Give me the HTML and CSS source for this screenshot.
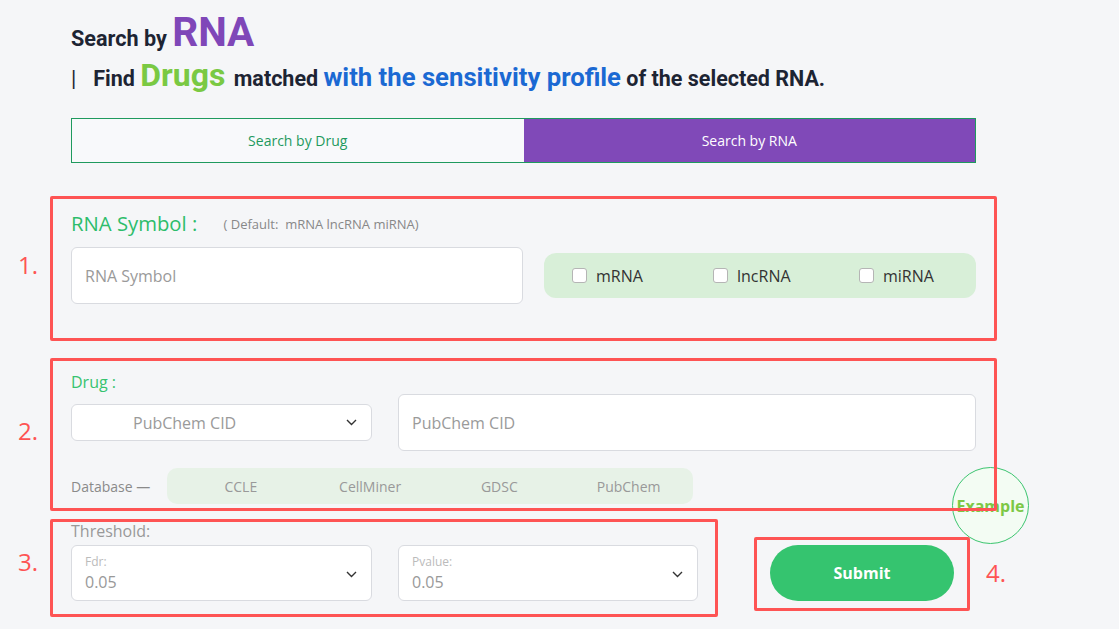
FILE: index.html
```html
<!DOCTYPE html>
<html lang="en">
<head>
    <meta charset="UTF-8">
    <meta name="viewport" content="width=device-width, initial-scale=1.0">
    <title>Search by RNA</title>
    <link rel="stylesheet" href="styles.css">
</head>
<body>

<div class="page">

    <h1 class="title">Search by <span class="title-rna">RNA</span></h1>
    <p class="subtitle"><span class="bar">|</span>Find <span class="hl-drugs">Drugs</span> matched <span class="hl-profile">with the sensitivity profile</span> of the selected RNA.</p>

    <!-- Switch between the two search modes -->
    <div class="tabs">
        <button class="tab">Search by Drug</button>
        <button class="tab active">Search by RNA</button>
    </div>

    <form class="search-form" onsubmit="return false">

        <!-- RNA symbol and type -->
        <section class="block-rna">
            <div class="block-label big">RNA Symbol : <small>( Default:&nbsp; mRNA lncRNA miRNA)</small></div>
            <div class="rna-row">
                <input class="field" type="text" placeholder="RNA Symbol">
                <div class="type-group">
                    <label class="type-item"><span class="check"></span>mRNA</label>
                    <label class="type-item"><span class="check"></span>lncRNA</label>
                    <label class="type-item"><span class="check"></span>miRNA</label>
                </div>
            </div>
        </section>

        <!-- Drug id and database -->
        <section class="block-drug">
            <div class="block-label">Drug :</div>
            <div class="drug-row">
                <div class="select small-select">
                    <span class="select-text">PubChem CID</span>
                    <svg class="chevron" width="11" height="7" viewBox="0 0 11 7"><polyline points="1,1 5.5,5.5 10,1" fill="none" stroke="#333" stroke-width="1.4"/></svg>
                </div>
                <input class="field" type="text" placeholder="PubChem CID">
            </div>
            <div class="db-row">
                <span class="db-label">Database —</span>
                <div class="db-group">
                    <span>CCLE</span>
                    <span>CellMiner</span>
                    <span>GDSC</span>
                    <span>PubChem</span>
                </div>
            </div>
        </section>

        <!-- Thresholds and submit -->
        <section class="block-threshold">
            <div class="threshold">
                <div class="threshold-label">Threshold:</div>
                <div class="threshold-row">
                    <div class="select value-select">
                        <div>
                            <div class="select-caption">Fdr:</div>
                            <div class="select-value">0.05</div>
                        </div>
                        <svg class="chevron" width="11" height="7" viewBox="0 0 11 7"><polyline points="1,1 5.5,5.5 10,1" fill="none" stroke="#333" stroke-width="1.4"/></svg>
                    </div>
                    <div class="select value-select">
                        <div>
                            <div class="select-caption">Pvalue:</div>
                            <div class="select-value">0.05</div>
                        </div>
                        <svg class="chevron" width="11" height="7" viewBox="0 0 11 7"><polyline points="1,1 5.5,5.5 10,1" fill="none" stroke="#333" stroke-width="1.4"/></svg>
                    </div>
                </div>
            </div>
            <button class="submit-btn" type="submit">Submit</button>
        </section>
    </form>

    <button class="example-btn">Example</button>

    <!-- Step markers -->
    <div class="step-box step-box-1"></div>
    <div class="step-box step-box-2"></div>
    <div class="step-box step-box-3"></div>
    <div class="step-box step-box-4"></div>
    <span class="step-num step-num-1">1.</span>
    <span class="step-num step-num-2">2.</span>
    <span class="step-num step-num-3">3.</span>
    <span class="step-num step-num-4">4.</span>

</div>

</body>
</html>
```

FILE: styles.css
```css
body {
    margin: 0;
    padding: 0;
    background-color: #f5f6f8;
    font-family: "Open Sans", Arial, sans-serif;
    color: #333;
}
.page {
    position: relative;
    width: 1119px;
    height: 629px;
    overflow: hidden;
    padding-left: 71px;
    box-sizing: border-box;
}
.title {
    margin: 12px 0 0;
    font-family: Roboto, Arial, sans-serif;
    font-size: 21.6px;
    font-weight: 700;
    line-height: 40px;
    color: #1d2433;
}
.title-rna {
    font-size: 40.5px;
    line-height: 1;
    color: #7f47b8;
}
.subtitle {
    margin: 0;
    font-family: Roboto, Arial, sans-serif;
    font-size: 21.5px;
    font-weight: 700;
    line-height: 40px;
    color: #1d2433;
}
.bar {
    font-weight: 400;
    margin-right: 17px;
}
.hl-drugs {
    font-size: 32px;
    line-height: 1;
    color: #7ac943;
    margin-right: 3px;
}
.hl-profile {
    font-size: 25.7px;
    line-height: 1;
    color: #1b69d3;
}
.tabs {
    display: flex;
    width: 905px;
    height: 45px;
    margin-top: 19px;
    border: 1px solid #1f9a5e;
    box-sizing: border-box;
}
.tab {
    flex: 1;
    border: none;
    background-color: #f8f9fb;
    color: #1f9a5e;
    font-family: "Open Sans", Arial, sans-serif;
    font-size: 14px;
    cursor: pointer;
}
.tab.active {
    background-color: #8049b8;
    color: #fff;
}
.search-form {
    width: 905px;
}
.block-label {
    font-size: 16px;
    line-height: 20px;
    color: #36c36f;
}
.block-label.big {
    font-size: 20.3px;
    line-height: 26px;
    color: #2dbd6b;
}
.block-label small {
    margin-left: 21px;
    font-size: 13px;
    color: #888;
    vertical-align: 2px;
}
.block-rna {
    margin-top: 47px;
}
.rna-row {
    display: flex;
    align-items: center;
    gap: 21px;
    margin-top: 10px;
}
.field {
    height: 57px;
    padding: 0 13px;
    border: 1px solid #d9dbe0;
    border-radius: 6px;
    background-color: #fff;
    font-family: "Open Sans", Arial, sans-serif;
    font-size: 16px;
    box-sizing: border-box;
    outline: none;
}
.field::placeholder {
    color: #9a9a9a;
}
.rna-row .field {
    width: 452px;
}
.type-group {
    flex: 1;
    height: 45px;
    display: grid;
    grid-template-columns: 141px 146px 1fr;
    align-items: center;
    padding-left: 28px;
    box-sizing: border-box;
    background-color: #d8efd8;
    border-radius: 12px;
}
.type-item {
    display: flex;
    align-items: center;
    gap: 9px;
    font-size: 16px;
    color: #333;
    cursor: pointer;
}
.check {
    width: 15px;
    height: 15px;
    background-color: #fff;
    border: 1px solid #b5b5b5;
    border-radius: 3px;
    box-sizing: border-box;
}
.block-drug {
    margin-top: 68px;
}
.drug-row {
    display: flex;
    align-items: center;
    gap: 26px;
    margin-top: 2px;
}
.drug-row .field {
    flex: 1;
}
.select {
    display: flex;
    align-items: center;
    justify-content: space-between;
    background-color: #fff;
    border: 1px solid #d9dbe0;
    border-radius: 6px;
    box-sizing: border-box;
    cursor: pointer;
}
.small-select {
    width: 301px;
    height: 37px;
    padding: 0 14px 0 61px;
}
.select-text {
    font-size: 16px;
    color: #9a9a9a;
}
.db-row {
    display: flex;
    align-items: center;
    gap: 17px;
    margin-top: 17px;
}
.db-label {
    font-size: 14px;
    color: #8a8a8a;
}
.db-group {
    width: 526px;
    height: 36px;
    display: grid;
    grid-template-columns: repeat(4, 1fr);
    align-items: center;
    justify-items: center;
    padding-left: 9px;
    box-sizing: border-box;
    background-color: #e7f2e7;
    border-radius: 10px;
    font-size: 14px;
    color: #999;
}
.block-threshold {
    display: flex;
    align-items: flex-end;
    margin-top: 16px;
}
.threshold-label {
    font-size: 16px;
    line-height: 22px;
    color: #999;
}
.threshold-row {
    display: flex;
    gap: 26px;
    margin-top: 3px;
}
.value-select {
    width: 301px;
    height: 56px;
    padding: 2px 14px 0 13px;
}
.value-select + .value-select {
    width: 300px;
}
.select-caption {
    font-size: 12px;
    line-height: 16px;
    color: #bbb;
}
.select-value {
    font-size: 16px;
    line-height: 24px;
    color: #999;
}
.submit-btn {
    width: 184px;
    height: 56px;
    margin-left: 72px;
    border: none;
    border-radius: 28px;
    background-color: #35c46f;
    color: #fff;
    font-family: "Open Sans", Arial, sans-serif;
    font-size: 16px;
    font-weight: 700;
    cursor: pointer;
}
.example-btn {
    position: absolute;
    left: 952px;
    top: 467px;
    width: 77px;
    height: 77px;
    padding: 0;
    border: 1px solid #3cc56f;
    border-radius: 50%;
    background-color: #f3fcf3;
    color: #7cc846;
    font-family: "Open Sans", Arial, sans-serif;
    font-size: 16px;
    font-weight: 700;
    cursor: pointer;
}
.step-box {
    position: absolute;
    border: 3px solid #fe5454;
    box-sizing: border-box;
    border-radius: 2px;
}
.step-box-1 { left: 50px; top: 196px; width: 947px; height: 145px; }
.step-box-2 { left: 50px; top: 358px; width: 947px; height: 153px; }
.step-box-3 { left: 50px; top: 519px; width: 668px; height: 98px; }
.step-box-4 { left: 754px; top: 537px; width: 216px; height: 74px; }
.step-num {
    position: absolute;
    font-family: "Open Sans", Arial, sans-serif;
    font-size: 24px;
    line-height: 30px;
    color: #fe5454;
}
.step-num-1 { left: 18px; top: 250px; }
.step-num-2 { left: 18px; top: 416px; }
.step-num-3 { left: 18px; top: 547px; }
.step-num-4 { left: 986px; top: 558px; }
```
